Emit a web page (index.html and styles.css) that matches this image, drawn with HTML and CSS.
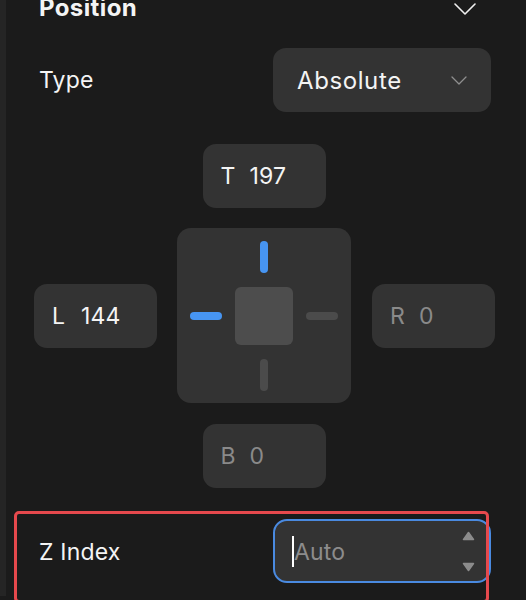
FILE: index.html
```html
<!DOCTYPE html>
<html lang="en">
<head>
<meta charset="utf-8">
<title>Position</title>
<link rel="stylesheet" href="styles.css">
</head>
<body>
<div class="panel">
  <div class="section-header">
    <span class="title">Position</span>
    <svg class="chev-lg" width="22" height="12" viewBox="0 0 22 12"><path d="M1 1 L11 11 L21 1" fill="none" stroke="#f0f0f0" stroke-width="1.6" stroke-linecap="round" stroke-linejoin="round"/></svg>
  </div>

  <div class="row">
    <span class="label">Type</span>
    <div class="select">
      <span class="select-value">Absolute</span>
      <svg width="16" height="9" viewBox="0 0 16 9"><path d="M1 1 L8 8 L15 1" fill="none" stroke="#8f8f8f" stroke-width="1.3" stroke-linecap="round" stroke-linejoin="round"/></svg>
    </div>
  </div>

  <div class="pos-grid">
    <div class="field f-top"><span class="k">T</span><span class="v">197</span></div>
    <div class="field f-left"><span class="k">L</span><span class="v">144</span></div>
    <div class="pad">
      <span></span><span class="bar vbar on"></span><span></span>
      <span class="bar hbar on"></span><span class="box"></span><span class="bar hbar"></span>
      <span></span><span class="bar vbar"></span><span></span>
    </div>
    <div class="field f-right muted"><span class="k">R</span><span class="v">0</span></div>
    <div class="field f-bottom muted"><span class="k">B</span><span class="v">0</span></div>
  </div>

  <div class="row zrow">
    <span class="label">Z Index</span>
    <div class="num-input">
      <span class="caret"></span><span class="placeholder">Auto</span>
      <span class="spin">
        <svg width="13" height="10" viewBox="0 0 13 10"><path d="M6.5 1.5 L11.5 8.5 L1.5 8.5 Z" fill="#8c8c8c" stroke="#8c8c8c" stroke-width="1.5" stroke-linejoin="round"/></svg>
        <svg width="13" height="10" viewBox="0 0 13 10"><path d="M6.5 8.5 L11.5 1.5 L1.5 1.5 Z" fill="#8c8c8c" stroke="#8c8c8c" stroke-width="1.5" stroke-linejoin="round"/></svg>
      </span>
    </div>
    <div class="highlight"></div>
  </div>
</div>
</body>
</html>
```

FILE: styles.css
```css
* { box-sizing: border-box; }

html, body {
  margin: 0;
  height: 100%;
  background: #1b1b1b;
}

body {
  font-family: Inter, "Noto Sans", "Liberation Sans", sans-serif;
  color: #f4f4f4;
  font-size: 23px;
  letter-spacing: 0.2px;
  overflow: hidden;
}

.panel {
  min-height: 100%;
  border-left: 6px solid #252525;
  padding: 0 35px 0 33px;
}

.section-header {
  display: flex;
  justify-content: space-between;
  align-items: center;
  height: 24px;
  margin-top: -4px;
  padding-right: 15px;
}

.title {
  font-weight: 700;
  font-size: 24px;
  letter-spacing: 0.4px;
  line-height: 24px;
}

.chev-lg { display: block; margin-top: 2px; }

.row {
  display: flex;
  justify-content: space-between;
  align-items: center;
  height: 64px;
  margin-top: 28px;
}

.label { line-height: 26px; }

.select {
  width: 218px;
  height: 64px;
  border-radius: 13px;
  background: #333333;
  display: flex;
  align-items: center;
  justify-content: space-between;
  padding: 0 24px 0 24px;
}

.select-value {
  font-weight: 400;
  font-size: 24px;
  letter-spacing: 0.6px;
  color: #f4f4f4;
}

.select svg { display: block; margin-top: 1px; }

.pos-grid {
  display: grid;
  grid-template-columns: 123px 174px 124px;
  grid-template-rows: 64px 175px 64px;
  column-gap: 20px;
  row-gap: 20px;
  margin: 32px 0 0 -5px;
  width: 461px;
}

.field {
  width: 123px;
  height: 64px;
  border-radius: 13px;
  background: #333333;
  display: flex;
  align-items: center;
  padding-left: 18px;
  line-height: 26px;
}

.field .k { width: 29px; }

.field.muted { color: #8a8a8a; }

.f-top { grid-column: 2; grid-row: 1; justify-self: center; }
.f-left { grid-column: 1; grid-row: 2; align-self: center; }
.f-right { grid-column: 3; grid-row: 2; align-self: center; justify-self: end; }
.f-bottom { grid-column: 2; grid-row: 3; justify-self: center; margin-top: 1px; }

.pad {
  grid-column: 2;
  grid-row: 2;
  background: #333333;
  border-radius: 14px;
  display: grid;
  grid-template-columns: 32px 58px 32px;
  grid-template-rows: 32px 58px 32px;
  column-gap: 13px;
  row-gap: 14px;
  justify-content: center;
  align-content: center;
  justify-items: center;
  align-items: center;
}

.bar { background: #4b4b4b; border-radius: 4px; display: block; }
.bar.on { background: #4795f2; }
.vbar { width: 8px; height: 32px; }
.hbar { width: 32px; height: 8px; }
.box { width: 58px; height: 58px; background: #4d4d4d; border-radius: 6px; display: block; }

.zrow {
  position: relative;
  margin-top: 32px;
}

.zrow .label { margin-top: 2px; }

.num-input {
  width: 218px;
  height: 64px;
  border-radius: 14px;
  background: #333333;
  border: 2px solid #4a8ae0;
  display: flex;
  align-items: center;
  padding: 0 14px 0 17px;
  margin-right: -35px;
  position: relative;
  left: -35px;
}

.caret {
  width: 2px;
  height: 31px;
  background: #ffffff;
  display: block;
}

.placeholder {
  color: #8c8c8c;
  line-height: 26px;
  flex: 1;
  margin-top: 2px;
}

.spin {
  display: flex;
  flex-direction: column;
  gap: 21px;
  margin-top: 1px;
}
.spin svg { display: block; }

.highlight {
  position: absolute;
  left: -25px;
  right: 2px;
  top: -8px;
  height: 92px;
  border: 3px solid #e6494d;
  border-radius: 5px;
  pointer-events: none;
}
```
